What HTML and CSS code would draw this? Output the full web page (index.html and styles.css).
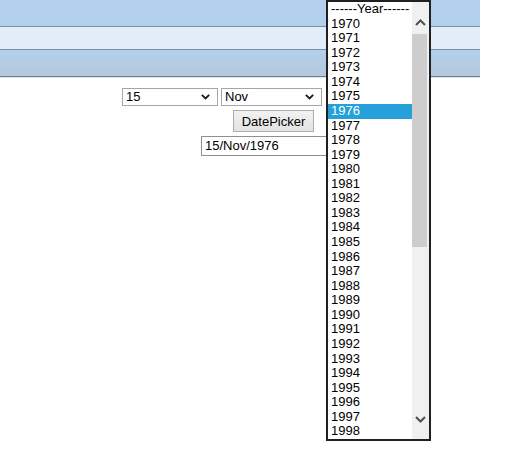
FILE: index.html
```html
<!DOCTYPE html>
<html>
<head>
<meta charset="utf-8">
<link rel="stylesheet" href="styles.css">
</head>
<body>
<div class="header">
  <div class="band band-top"></div>
  <div class="band band-mid"></div>
  <div class="band band-bot"></div>
</div>
<div class="form">
  <div class="row row-selects">
    <div class="sel sel-day"><span>15</span><svg class="chev" width="9" height="6" viewBox="0 0 9 6"><path d="M0.8 0.8 L4.5 4.5 L8.2 0.8" fill="none" stroke="#1a1a1a" stroke-width="1.8"/></svg></div>
    <div class="sel sel-month"><span>Nov</span><svg class="chev" width="9" height="6" viewBox="0 0 9 6"><path d="M0.8 0.8 L4.5 4.5 L8.2 0.8" fill="none" stroke="#1a1a1a" stroke-width="1.8"/></svg></div>
    <div class="sel sel-year"><span>1976</span></div>
  </div>
  <div class="row row-button">
    <button class="btn">DatePicker</button>
  </div>
  <div class="row row-input">
    <div class="field">15/Nov/1976</div>
  </div>
</div>

<div class="popup">
  <div class="list">
    <div class="opt">------Year------</div>
    <div class="opt">1970</div>
    <div class="opt">1971</div>
    <div class="opt">1972</div>
    <div class="opt">1973</div>
    <div class="opt">1974</div>
    <div class="opt">1975</div>
    <div class="opt selected">1976</div>
    <div class="opt">1977</div>
    <div class="opt">1978</div>
    <div class="opt">1979</div>
    <div class="opt">1980</div>
    <div class="opt">1981</div>
    <div class="opt">1982</div>
    <div class="opt">1983</div>
    <div class="opt">1984</div>
    <div class="opt">1985</div>
    <div class="opt">1986</div>
    <div class="opt">1987</div>
    <div class="opt">1988</div>
    <div class="opt">1989</div>
    <div class="opt">1990</div>
    <div class="opt">1991</div>
    <div class="opt">1992</div>
    <div class="opt">1993</div>
    <div class="opt">1994</div>
    <div class="opt">1995</div>
    <div class="opt">1996</div>
    <div class="opt">1997</div>
    <div class="opt">1998</div>
  </div>
  <div class="scrollbar">
    <div class="arrow arrow-up"><svg width="11" height="7" viewBox="0 0 11 7"><path d="M1 6 L5.5 1.5 L10 6" fill="none" stroke="#505050" stroke-width="2"/></svg></div>
    <div class="thumb"></div>
    <div class="track"></div>
    <div class="arrow arrow-down"><svg width="11" height="7" viewBox="0 0 11 7"><path d="M1 1 L5.5 5.5 L10 1" fill="none" stroke="#505050" stroke-width="2"/></svg></div>
  </div>
</div>
</body>
</html>
```
FILE: styles.css
```css
html, body {
  margin: 0;
  padding: 0;
  background: #ffffff;
  font-family: "Liberation Sans", Arial, sans-serif;
  font-size: 13px;
  color: #000;
}

.header {
  width: 480px;
}
.band {
  border-bottom: 1px solid #7b8fa3;
}
.band-top {
  height: 26px;
  background: #b3d0ec;
}
.band-mid {
  height: 22px;
  background: #e3edf8;
}
.band-bot {
  height: 26px;
  background: linear-gradient(#b3d0ec, #b6c8db);
  border-bottom: 1px solid #6d7d8d;
  box-shadow: 0 1px 0 #dfe6ee;
}

.form {
  padding-top: 11px;
}
.row {
  display: flex;
}
.row-selects {
  padding-left: 122px;
  gap: 3px;
}
.sel {
  box-sizing: border-box;
  height: 18px;
  border: 1px solid #a6a6a6;
  background: #fff;
  display: flex;
  align-items: center;
  justify-content: space-between;
  padding: 0 7px 0 3px;
  line-height: 16px;
}
.sel-day { width: 96px; }
.sel-month { width: 101px; }
.sel-year { width: 105px; margin-left: 1px; }

.row-button {
  padding-left: 233px;
  margin-top: 4px;
}
.btn {
  box-sizing: border-box;
  width: 81px;
  height: 22px;
  margin: 0;
  padding: 0;
  border: 1px solid #adadad;
  background: linear-gradient(#f2f2f2, #e3e3e3);
  font-family: "Liberation Sans", Arial, sans-serif;
  font-size: 13px;
  color: #000;
}

.row-input {
  padding-left: 201px;
  margin-top: 4px;
}
.field {
  box-sizing: border-box;
  width: 230px;
  height: 20px;
  border: 1px solid #8f8f8f;
  padding: 0 3px;
  line-height: 18px;
}

.popup {
  position: absolute;
  left: 326px;
  top: 0;
  width: 105px;
  height: 441px;
  box-sizing: border-box;
  border: 2px solid #202020;
  background: #fff;
  display: flex;
}
.list {
  flex: 1;
  overflow: hidden;
}
.opt {
  height: 14.57px;
  line-height: 14.57px;
  padding-left: 3px;
  white-space: nowrap;
}
.opt.selected {
  background: #26a0da;
  color: #fff;
}

.scrollbar {
  width: 17px;
  background: #f0f0f0;
  display: flex;
  flex-direction: column;
}
.arrow {
  display: flex;
  justify-content: center;
}
.arrow-up {
  height: 32px;
  box-sizing: border-box;
  align-items: flex-start;
  padding-top: 17px;
}
.arrow-down {
  height: 32px;
  box-sizing: border-box;
  align-items: flex-start;
  padding-top: 9px;
}
.thumb {
  height: 213px;
  background: #cdcdcd;
  margin-right: 2px;
}
.track {
  flex: 1;
}
```
